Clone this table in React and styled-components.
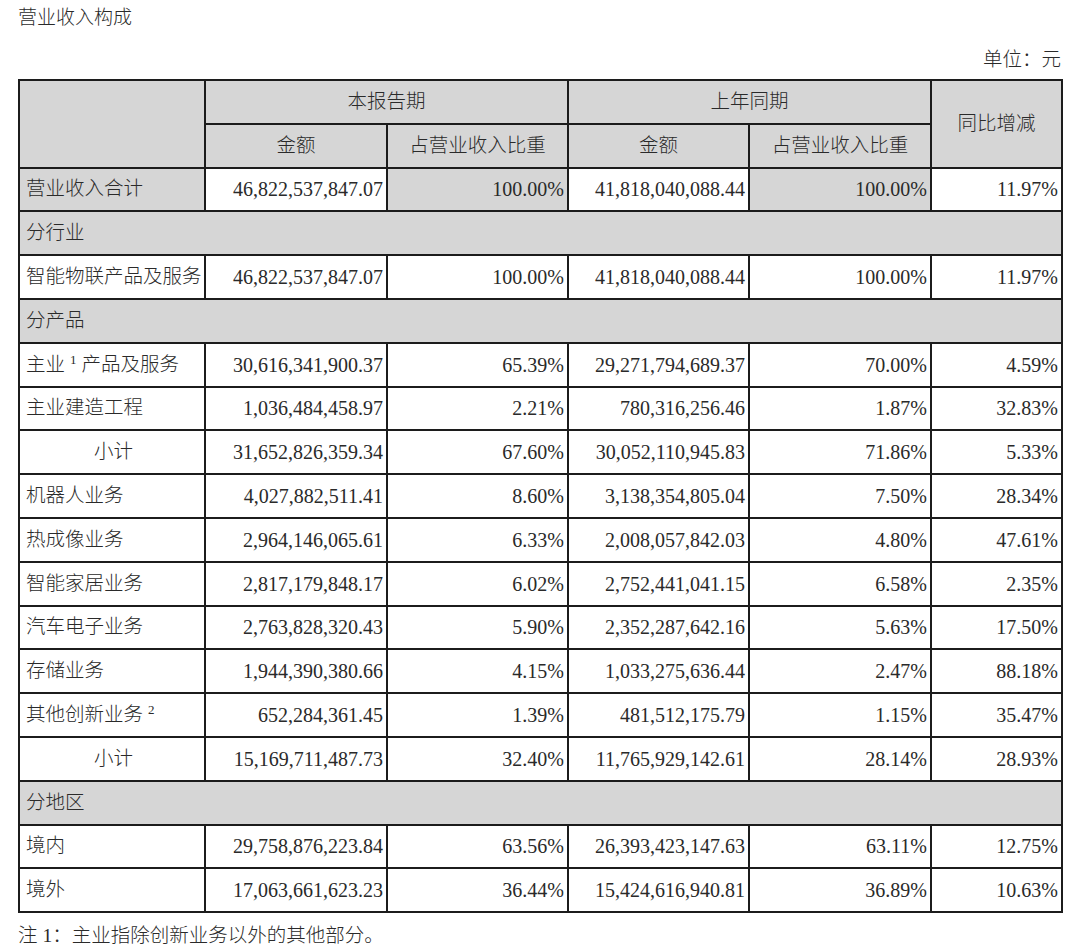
import styled, { createGlobalStyle } from 'styled-components';

const rows = [
  { type: 'total', label: '营业收入合计', values: ['46,822,537,847.07', '100.00%', '41,818,040,088.44', '100.00%', '11.97%'] },
  { type: 'section', label: '分行业' },
  { label: '智能物联产品及服务', values: ['46,822,537,847.07', '100.00%', '41,818,040,088.44', '100.00%', '11.97%'] },
  { type: 'section', label: '分产品' },
  { label: '主业', note: '1', rest: '产品及服务', values: ['30,616,341,900.37', '65.39%', '29,271,794,689.37', '70.00%', '4.59%'] },
  { label: '主业建造工程', values: ['1,036,484,458.97', '2.21%', '780,316,256.46', '1.87%', '32.83%'] },
  { type: 'subtotal', label: '小计', values: ['31,652,826,359.34', '67.60%', '30,052,110,945.83', '71.86%', '5.33%'] },
  { label: '机器人业务', values: ['4,027,882,511.41', '8.60%', '3,138,354,805.04', '7.50%', '28.34%'] },
  { label: '热成像业务', values: ['2,964,146,065.61', '6.33%', '2,008,057,842.03', '4.80%', '47.61%'] },
  { label: '智能家居业务', values: ['2,817,179,848.17', '6.02%', '2,752,441,041.15', '6.58%', '2.35%'] },
  { label: '汽车电子业务', values: ['2,763,828,320.43', '5.90%', '2,352,287,642.16', '5.63%', '17.50%'] },
  { label: '存储业务', values: ['1,944,390,380.66', '4.15%', '1,033,275,636.44', '2.47%', '88.18%'] },
  { label: '其他创新业务', note: '2', values: ['652,284,361.45', '1.39%', '481,512,175.79', '1.15%', '35.47%'] },
  { type: 'subtotal', label: '小计', values: ['15,169,711,487.73', '32.40%', '11,765,929,142.61', '28.14%', '28.93%'] },
  { type: 'section', label: '分地区' },
  { label: '境内', values: ['29,758,876,223.84', '63.56%', '26,393,423,147.63', '63.11%', '12.75%'] },
  { label: '境外', values: ['17,063,661,623.23', '36.44%', '15,424,616,940.81', '36.89%', '10.63%'] },
];

const colWidths = [186, 182, 181, 181, 182, 131];

function App() {
  return (
    <>
      <GlobalStyle />
      <Page>
        <Title>营业收入构成</Title>
        <Unit>单位：元</Unit>
        <Table>
          <colgroup>
            {colWidths.map((w, i) => (
              <col key={i} style={{ width: w }} />
            ))}
          </colgroup>
          <thead>
            <Row>
              <HeadCell rowSpan={2} />
              <HeadCell colSpan={2}>本报告期</HeadCell>
              <HeadCell colSpan={2}>上年同期</HeadCell>
              <HeadCell rowSpan={2}>同比增减</HeadCell>
            </Row>
            <Row>
              <HeadCell>金额</HeadCell>
              <HeadCell>占营业收入比重</HeadCell>
              <HeadCell>金额</HeadCell>
              <HeadCell>占营业收入比重</HeadCell>
            </Row>
          </thead>
          <tbody>
            {rows.map((row, i) => {
              if (row.type === 'section') {
                return (
                  <Row key={i}>
                    <Cell colSpan={6} $shade>
                      {row.label}
                    </Cell>
                  </Row>
                );
              }
              const isTotal = row.type === 'total';
              return (
                <Row key={i}>
                  <Cell $shade={isTotal} $center={row.type === 'subtotal'}>
                    {row.label}
                    {row.note && <Sup>{row.note}</Sup>}
                    {row.rest}
                  </Cell>
                  {row.values.map((v, j) => (
                    <NumCell key={j} $shade={isTotal && j % 2 === 1}>
                      {v}
                    </NumCell>
                  ))}
                </Row>
              );
            })}
          </tbody>
        </Table>
        <Footnote>注 1：主业指除创新业务以外的其他部分。</Footnote>
      </Page>
    </>
  );
}

const GlobalStyle = createGlobalStyle`
  body {
    margin: 0;
    background: #fff;
    font-family: "Liberation Serif", "Noto Sans CJK SC", serif;
    font-weight: 300;
    color: #2a2a2a;
  }
`;

const Page = styled.div`
  padding: 6px 19px 0 18px;
  font-size: 19.5px;
  line-height: 24px;
`;

const Title = styled.div`
  font-size: 19px;
`;

const Unit = styled.div`
  margin-top: 18px;
  text-align: right;
`;

const Table = styled.table`
  width: 1043px;
  margin-top: 7px;
  border-collapse: collapse;
  table-layout: fixed;
`;

const Row = styled.tr`
  height: 43.8px;
`;

const HeadCell = styled.td`
  border: 2px solid #1c1c1c;
  background: #d6d6d6;
  text-align: center;
  padding: 0;
`;

const Cell = styled.td`
  border: 2px solid #1c1c1c;
  background: ${({ $shade }) => ($shade ? '#d6d6d6' : '#fff')};
  text-align: ${({ $center }) => ($center ? 'center' : 'left')};
  padding: 0 3px 0 6px;
  white-space: nowrap;
`;

const NumCell = styled(Cell)`
  text-align: right;
  padding: 0 3px 0 4px;
  font-size: 20px;
`;

const Sup = styled.sup`
  font-size: 13px;
  line-height: 0;
  margin: 0 5px;
  vertical-align: 7px;
`;

const Footnote = styled.div`
  margin-top: 11px;
`;

export default App;
